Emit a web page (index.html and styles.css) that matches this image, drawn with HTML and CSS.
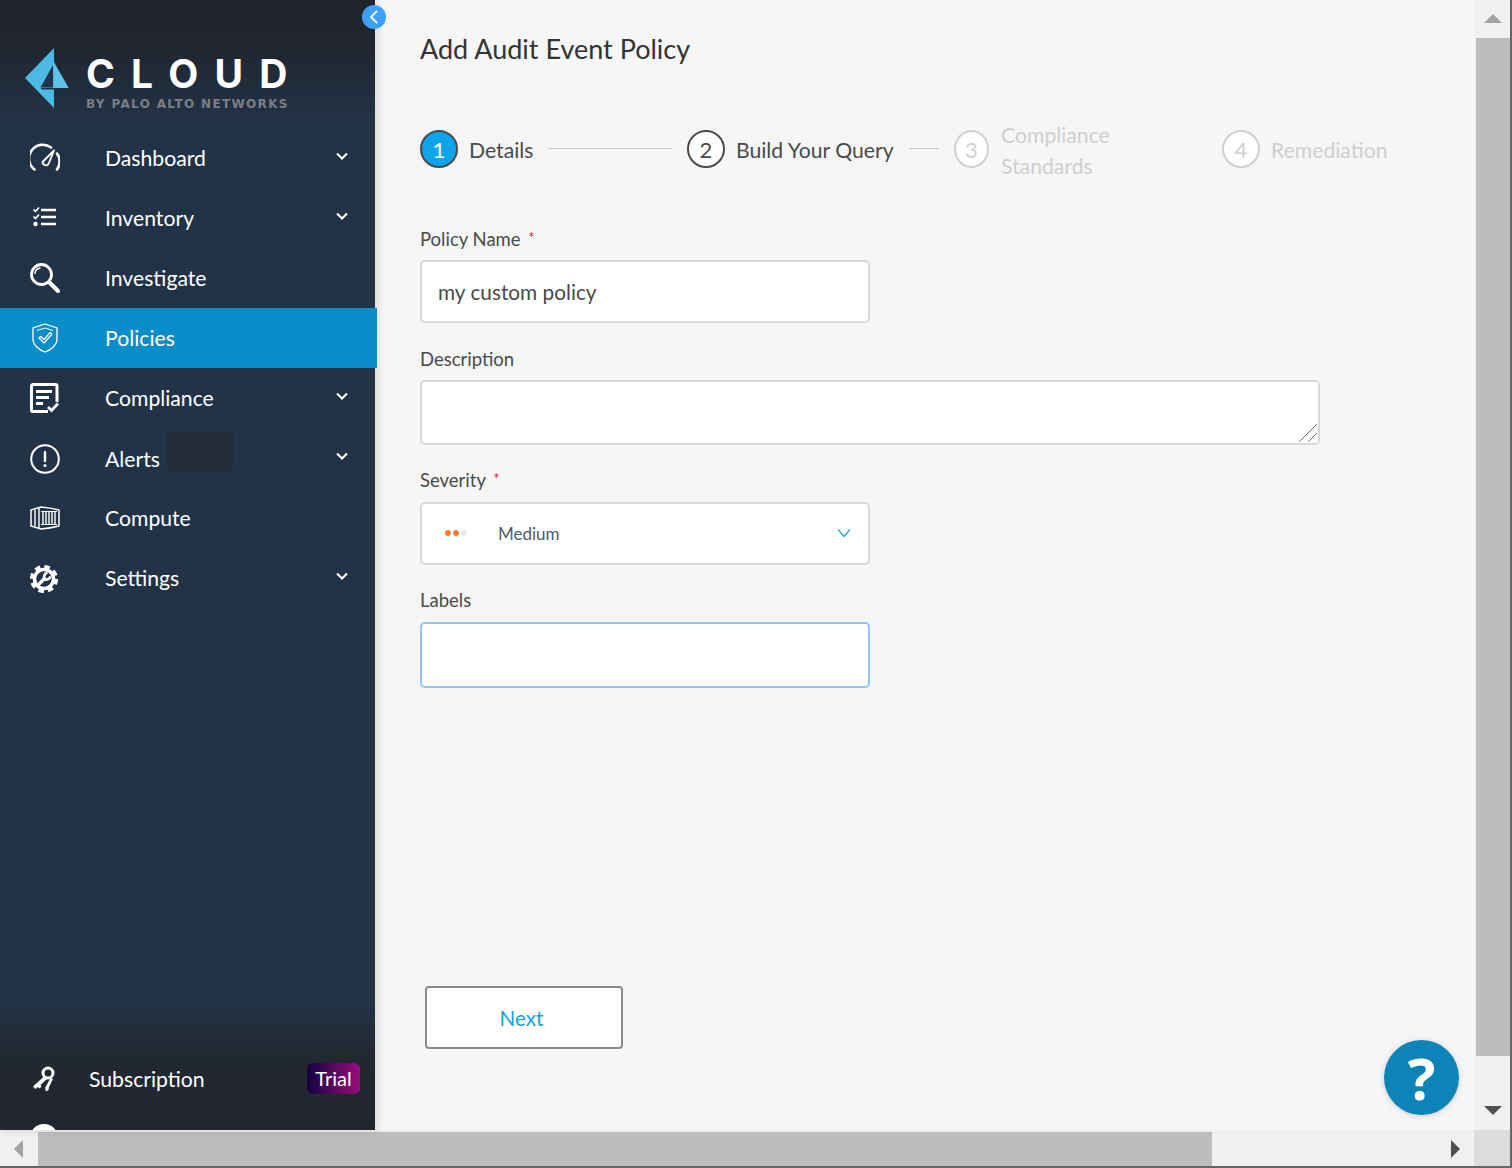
FILE: index.html
```html
<!DOCTYPE html>
<html lang="en">
<head>
<meta charset="utf-8">
<title>Add Audit Event Policy</title>
<link rel="stylesheet" href="styles.css">
</head>
<body>
<div class="window">
  <div class="upper">
    <aside class="sidebar">
      <button class="collapse" aria-label="Collapse">
        <svg viewBox="0 0 24 24" width="24" height="24"><path d="M14.500 6.500 9 12l5.500 5.500" fill="none" stroke="#fff" stroke-width="1.800" stroke-linecap="round" stroke-linejoin="round"/></svg>
      </button>
      <div class="brand">
        <svg class="brand-mark" viewBox="0 0 46 62" width="46" height="62">
          <path d="M30 1 1 31l29 30V41h14.500L30 15z" fill="#4cb9e3"/>
          <path d="M30 16 44.500 41H30.500z" fill="#5cc3ea"/>
          <path d="M16.500 40.500 29 18v22.500z" fill="#233248"/>
          <path d="M16.500 41H30v1.500H18z" fill="#233248"/>
        </svg>
        <div class="brand-text">
          <div class="brand-name">CLOUD</div>
          <div class="brand-sub">BY PALO ALTO NETWORKS</div>
        </div>
      </div>
      <nav class="nav">
        <a class="nav-item">
          <svg class="nav-icon" viewBox="0 0 30 30"><g fill="none" stroke="#fff" stroke-width="2.600" stroke-linecap="round"><path d="M4.500 26.500A13.500 13.500 0 0 1 21 4.500"/><path d="M27 10.500A13.500 13.500 0 0 1 27 26.500"/></g><path d="M24 7.500 18.500 21c-1.500 2.500-6 1-6-2z" fill="none" stroke="#fff" stroke-width="1.800" stroke-linejoin="round"/></svg>
          <span class="nav-label">Dashboard</span>
          <svg class="chev" viewBox="0 0 12 8"><path d="M1 1.500 6 6.500l5-5" fill="none" stroke="#fff" stroke-width="2"/></svg>
        </a>
        <a class="nav-item">
          <svg class="nav-icon" viewBox="0 0 30 30"><g fill="none" stroke="#fff"><path d="M11 7h15M11 14h15M11 21h15" stroke-width="2.400"/><path d="M3.500 6.500 5.500 8.500 9 4.500M3.500 13.500 5.500 15.500 9 11.500" stroke-width="1.700"/></g><circle cx="5.500" cy="21" r="2.200" fill="#fff"/></svg>
          <span class="nav-label">Inventory</span>
          <svg class="chev" viewBox="0 0 12 8"><path d="M1 1.500 6 6.500l5-5" fill="none" stroke="#fff" stroke-width="2"/></svg>
        </a>
        <a class="nav-item">
          <svg class="nav-icon" viewBox="0 0 30 30"><circle cx="11.500" cy="11.500" r="10" fill="none" stroke="#fff" stroke-width="2.800"/><path d="M5 11c0-3 2-5.500 5.500-6" fill="none" stroke="#fff" stroke-width="1.300"/><path d="M20 20l8 8" stroke="#fff" stroke-width="4" stroke-linecap="round"/></svg>
          <span class="nav-label">Investigate</span>
        </a>
        <a class="nav-item is-active">
          <svg class="nav-icon" viewBox="0 0 30 30"><path d="M15 1 27 5v11c0 6-6 11-12 13C9 27 3 22 3 16V5z" fill="none" stroke="#fff" stroke-width="1.300"/><path d="M7 7.500 15 5l8 2.500" fill="none" stroke="#fff" stroke-width="1"/><path d="M9 15l5 5 8-9-1.800-1.600L14 16.500l-3.300-3.200z" fill="none" stroke="#fff" stroke-width="1.200" stroke-linejoin="round"/></svg>
          <span class="nav-label">Policies</span>
        </a>
        <a class="nav-item">
          <svg class="nav-icon" viewBox="0 0 30 30"><path d="M18 28.500H3A1.500 1.500 0 0 1 1.500 27V3A1.500 1.500 0 0 1 3 1.500h22.500A1.500 1.500 0 0 1 27 3v16" fill="none" stroke="#fff" stroke-width="3"/><path d="M6 7h16v3H6zM6 13h13v3H6zM6 19h7v3H6z" fill="#fff"/><path d="M18 24l3.500 3.500 6.500-7" fill="none" stroke="#fff" stroke-width="2.800"/></svg>
          <span class="nav-label">Compliance</span>
          <svg class="chev" viewBox="0 0 12 8"><path d="M1 1.500 6 6.500l5-5" fill="none" stroke="#fff" stroke-width="2"/></svg>
        </a>
        <a class="nav-item nav-item-alerts">
          <svg class="nav-icon" viewBox="0 0 30 30"><circle cx="15" cy="15" r="13.800" fill="none" stroke="#fff" stroke-width="2"/><path d="M15 8v9" stroke="#fff" stroke-width="2.400" stroke-linecap="round"/><circle cx="15" cy="21.500" r="1.500" fill="#fff"/></svg>
          <span class="nav-label">Alerts</span>
          <span class="redacted"></span>
          <svg class="chev" viewBox="0 0 12 8"><path d="M1 1.500 6 6.500l5-5" fill="none" stroke="#fff" stroke-width="2"/></svg>
        </a>
        <a class="nav-item">
          <svg class="nav-icon" viewBox="0 0 30 30"><path d="M1 7 11 4c6 .5 12 1.500 18 3v16c-6 1.500-12 2.500-18 3L1 23z" fill="none" stroke="#fff" stroke-width="1.500"/><path d="M5 7v16M9 5v20M13 9v12M16 9v12M19 9v12M22 9v12M25 9v12" fill="none" stroke="#fff" stroke-width="1.400"/><path d="M11 8.500h16M11 21.500h16" stroke="#fff" stroke-width="1"/></svg>
          <span class="nav-label">Compute</span>
        </a>
        <a class="nav-item">
          <svg class="nav-icon" viewBox="0 0 30 30"><circle cx="14" cy="16" r="9.500" fill="#233347" stroke="#fff" stroke-width="3.500"/><circle cx="14" cy="16" r="12.300" fill="none" stroke="#fff" stroke-width="3.600" stroke-dasharray="5.500 4.160"/><path d="M8.500 21.500l6-6" stroke="#fff" stroke-width="3.400" stroke-linecap="round"/><path d="M20.500 13.500A5 5 0 0 1 14.500 16.500 5 5 0 0 1 17.500 9.500" fill="none" stroke="#fff" stroke-width="2.600"/></svg>
          <span class="nav-label">Settings</span>
          <svg class="chev" viewBox="0 0 12 8"><path d="M1 1.500 6 6.500l5-5" fill="none" stroke="#fff" stroke-width="2"/></svg>
        </a>
      </nav>
      <div class="sidebar-foot">
        <div class="sub-row">
          <svg class="sub-icon" viewBox="0 0 26 26"><circle cx="17" cy="7" r="5" fill="none" stroke="#fff" stroke-width="3"/><path d="M13.500 10 2 20.500l2.500 2.500L7 21l1.500 1.500 2-2L9.500 19l6.500-6z" fill="#fff"/><path d="M19.500 12 14 22l1 3.500 2.500-1.500 .5-3 4-8z" fill="#fff"/></svg>
          <span class="sub-label">Subscription</span>
          <span class="trial">Trial</span>
        </div>
        <div class="avatar"></div>
      </div>
    </aside>

    <main class="main">
      <h1 class="title">Add Audit Event Policy</h1>

      <ol class="stepper">
        <li class="step step-1">
          <span class="step-dot is-current">1</span>
          <span class="step-label">Details</span>
          <span class="step-line line-1"></span>
        </li>
        <li class="step step-2">
          <span class="step-dot">2</span>
          <span class="step-label">Build Your Query</span>
          <span class="step-line line-2"></span>
        </li>
        <li class="step step-3 is-off">
          <span class="step-dot dot-narrow">3</span>
          <span class="step-label label-wrap">Compliance Standards</span>
        </li>
        <li class="step step-4 is-off">
          <span class="step-dot">4</span>
          <span class="step-label">Remediation</span>
        </li>
      </ol>

      <form class="form">
        <label class="field-label">Policy Name <span class="req">*</span></label>
        <input class="input input-name" type="text" value="my custom policy">

        <label class="field-label">Description</label>
        <div class="desc-wrap">
          <textarea class="input input-desc"></textarea>
          <svg class="grip" viewBox="0 0 20 20" width="20" height="20" shape-rendering="crispEdges"><path d="M1 19 19 1M10 19l9-9" fill="none" stroke="#777" stroke-width="1"/></svg>
        </div>

        <label class="field-label">Severity <span class="req">*</span></label>
        <div class="input select">
          <span class="sev"><i class="sev-dot on"></i><i class="sev-dot on"></i><i class="sev-dot"></i></span>
          <span class="select-value">Medium</span>
          <svg class="select-chev" viewBox="0 0 14 10"><path d="M1 1.500 7 8.500l6-7" fill="none" stroke="#1ba6e6" stroke-width="1.300"/></svg>
        </div>

        <label class="field-label">Labels</label>
        <div class="input input-labels"></div>

        <button type="button" class="next">Next</button>
      </form>

      <button class="help" aria-label="Help">?</button>
    </main>

    <div class="vscroll">
      <div class="v-btn"><span class="arrow-up"></span></div>
      <div class="v-thumb"></div>
      <div class="v-btn v-btn-down"><span class="arrow-down"></span></div>
    </div>
  </div>

  <div class="hscroll">
    <div class="h-btn"><span class="arrow-left"></span></div>
    <div class="h-thumb"></div>
    <div class="h-track"><span class="arrow-right"></span></div>
    <div class="h-corner"></div>
  </div>
</div>
</body>
</html>
```

FILE: styles.css
```css
* { box-sizing: border-box; }
html, body { margin: 0; height: 100%; overflow: hidden; }
body { font-family: Lato, "Noto Sans", sans-serif; background: #666; color: #4a4a4a; }

.window {
  width: 1510px;
  height: 1166px;
  display: flex;
  flex-direction: column;
  background: #f6f6f6;
}
.upper { flex: 1; min-height: 0; display: flex; }

/* Sidebar */
.sidebar {
  position: relative;
  z-index: 2;
  width: 375px;
  flex: none;
  display: flex;
  flex-direction: column;
  background: linear-gradient(180deg, #20242d 0, #20252e 40px, #233347 125px, #233347 1000px, #22282f 1060px, #22272f 100%);
  box-shadow: 2px 0 8px rgba(0, 0, 0, .14);
  color: #fff;
}
.collapse {
  position: absolute;
  top: 5px;
  left: 362px;
  width: 24px;
  height: 24px;
  padding: 0;
  border: 0;
  border-radius: 50%;
  background: #3fa0fb;
}
.collapse svg { display: block; }

.brand { height: 128px; padding: 47px 0 0 24px; display: flex; align-items: flex-start; gap: 16px; }
.brand-mark { flex: none; margin-top: 0; }
.brand-text { margin-top: 5px; width: 210px; }
.brand-name { font-family: Inter, "DejaVu Sans", sans-serif; font-weight: 700; font-size: 39px; line-height: 44px; letter-spacing: 16.200px; white-space: nowrap; }
.brand-sub { font-family: "DejaVu Sans", sans-serif; font-weight: 700; font-size: 12px; line-height: 13px; margin-top: 2px; letter-spacing: 1.350px; color: #7b7f85; white-space: nowrap; }

.nav { flex: 1; }
.nav-item { height: 60px; display: flex; align-items: center; padding: 0 27px 0 30px; font-size: 21.200px; color: #fff; }
.nav-icon { width: 30px; height: 30px; flex: none; margin-right: 45px; }
.nav-label { line-height: 30px; }
.chev { width: 12px; height: 8px; margin-left: auto; margin-top: -4px; }
.nav-item.is-active { background: #0a8dc8; margin-right: -2px; padding-right: 29px; }
.nav-item-alerts .nav-label { margin-top: 2px; }
.nav-item-alerts .nav-icon { margin-top: 2px; }
.redacted { width: 66px; height: 39px; margin-left: 7px; margin-top: -14px; background: #242c37; }

.sidebar-foot { height: 81px; overflow: hidden; padding-left: 30px; }
.sub-row { height: 60px; display: flex; align-items: center; padding-right: 15px; }
.sub-icon { width: 26px; height: 26px; flex: none; margin-right: 33px; margin-left: 1px; }
.sub-label { font-size: 21.200px; margin-left: -1px; }
.trial {
  margin-left: auto;
  height: 31px;
  width: 53px;
  border-radius: 6px;
  margin-top: -1px;
  background: linear-gradient(90deg, #12033f, #9a0d7e);
  font-size: 20px;
  line-height: 30px;
  text-align: center;
}
.avatar { width: 28px; height: 28px; margin-top: 15px; border-radius: 50%; background: #fff; }

/* Main */
.main { position: relative; flex: 1; min-width: 0; padding: 0 0 0 45px; }
.title { margin: 30px 0 0; font-weight: 400; font-size: 27px; line-height: 38px; color: #333; }

.stepper { list-style: none; margin: 50px 0 0; padding: 0; height: 62px; display: flex; align-items: center; font-size: 21.200px; }
.step { display: flex; align-items: center; }
.step-1 { width: 267px; }
.step-2 { width: 267px; }
.step-3 { width: 268px; }
.step-dot {
  width: 38px;
  height: 38px;
  flex: none;
  border: 2px solid #4a4a4a;
  border-radius: 50%;
  background: #fff;
  font-size: 22px;
  line-height: 35px;
  text-align: center;
  margin-right: 11px;
}
.step-dot.is-current { background: #0ca4ea; color: #fff; }
.step-dot.dot-narrow { width: 35px; margin-right: 12px; }
.step-label { line-height: 31px; margin-top: 2px; }
.label-wrap { width: 120px; margin-top: 4px; }
.step-line { flex: 1; height: 1px; margin: -1px 15px 0; background: #c8c8c8; }
.is-off { color: #cfcfcf; }
.is-off .step-dot { border-color: #cfcfcf; }

.form { display: flex; flex-direction: column; align-items: flex-start; margin-top: 45px; }
.field-label { font-size: 18.500px; line-height: 24px; color: #4a4a4a; margin-bottom: 9px; }
.req { color: #e8132f; font-size: 15px; margin-left: 3px; vertical-align: 3px; }
.input {
  display: block;
  width: 450px;
  border: 2px solid #d9d9d9;
  border-radius: 5px;
  background: #fff;
  font-family: Lato, "Noto Sans", sans-serif;
  outline: none;
  margin: 0 0 24px;
}
.input-name { height: 63px; padding: 0 16px; font-size: 20.800px; color: #4a4a4a; }
.desc-wrap { position: relative; width: 900px; height: 65px; margin-bottom: 21px; }
.input-desc { width: 900px; height: 65px; margin: 0; resize: none; }
.grip { position: absolute; right: 2px; bottom: 2px; }
.select { height: 63px; display: flex; align-items: center; padding: 0 17px 0 23px; margin-top: 1px; margin-bottom: 23px; }
.sev { display: flex; gap: 2px; width: 53px; flex: none; margin-top: -1px; }
.sev-dot { width: 6px; height: 6px; border-radius: 50%; background: #ececec; }
.sev-dot.on { background: #ff7a33; }
.select-value { font-size: 17px; color: #505a70; }
.select-chev { width: 14px; height: 10px; margin-left: auto; margin-top: -2px; }
.input-labels { height: 66px; border-color: #8ac8fb; margin-top: 1px; margin-bottom: 0; }

.next {
  margin: 298px 0 0 5px;
  width: 198px;
  height: 63px;
  padding: 0 5px 0 0;
  border: 2px solid #8a8a8a;
  border-radius: 4px;
  background: #fff;
  color: #1a9fe0;
  font-family: Lato, "Noto Sans", sans-serif;
  font-size: 20.600px;
}

.help {
  position: absolute;
  left: 1009px;
  top: 1040px;
  width: 75px;
  height: 75px;
  padding: 0;
  border: 0;
  border-radius: 50%;
  background: #0c83b9;
  box-shadow: 0 1px 6px rgba(0, 0, 0, .16);
  color: #fff;
  font-family: "Open Sans", Lato, sans-serif;
  font-weight: 700;
  font-size: 58px;
  line-height: 75px;
}

/* Scrollbars */
.vscroll { width: 35px; flex: none; display: flex; flex-direction: column; background: #f0f0f0; }
.v-btn { height: 38px; flex: none; display: flex; align-items: center; justify-content: center; }
.v-btn-down { height: 74px; align-items: flex-end; padding-bottom: 15px; }
.v-thumb { flex: 1; margin-left: 1px; background: #bdbdbd; }
.arrow-up { border: 9px solid transparent; border-top: 0; border-bottom: 9px solid #a3a3a3; margin-top: -1px; }
.arrow-down { border: 9px solid transparent; border-bottom: 0; border-top: 9px solid #505050; }

.hscroll { height: 36px; flex: none; padding-top: 2px; display: flex; background: #f0f0f0; }
.h-btn { width: 38px; flex: none; display: flex; align-items: center; justify-content: center; }
.h-thumb { width: 1174px; flex: none; background: #bdbdbd; }
.h-track { flex: 1; display: flex; align-items: center; justify-content: flex-end; padding-right: 14px; }
.h-corner { width: 36px; flex: none; margin-top: -2px; background: #dcdcdc; }
.arrow-left { border: 9px solid transparent; border-left: 0; border-right: 9px solid #a3a3a3; margin-right: 2px; }
.arrow-right { border: 9px solid transparent; border-right: 0; border-left: 9px solid #505050; }
```
